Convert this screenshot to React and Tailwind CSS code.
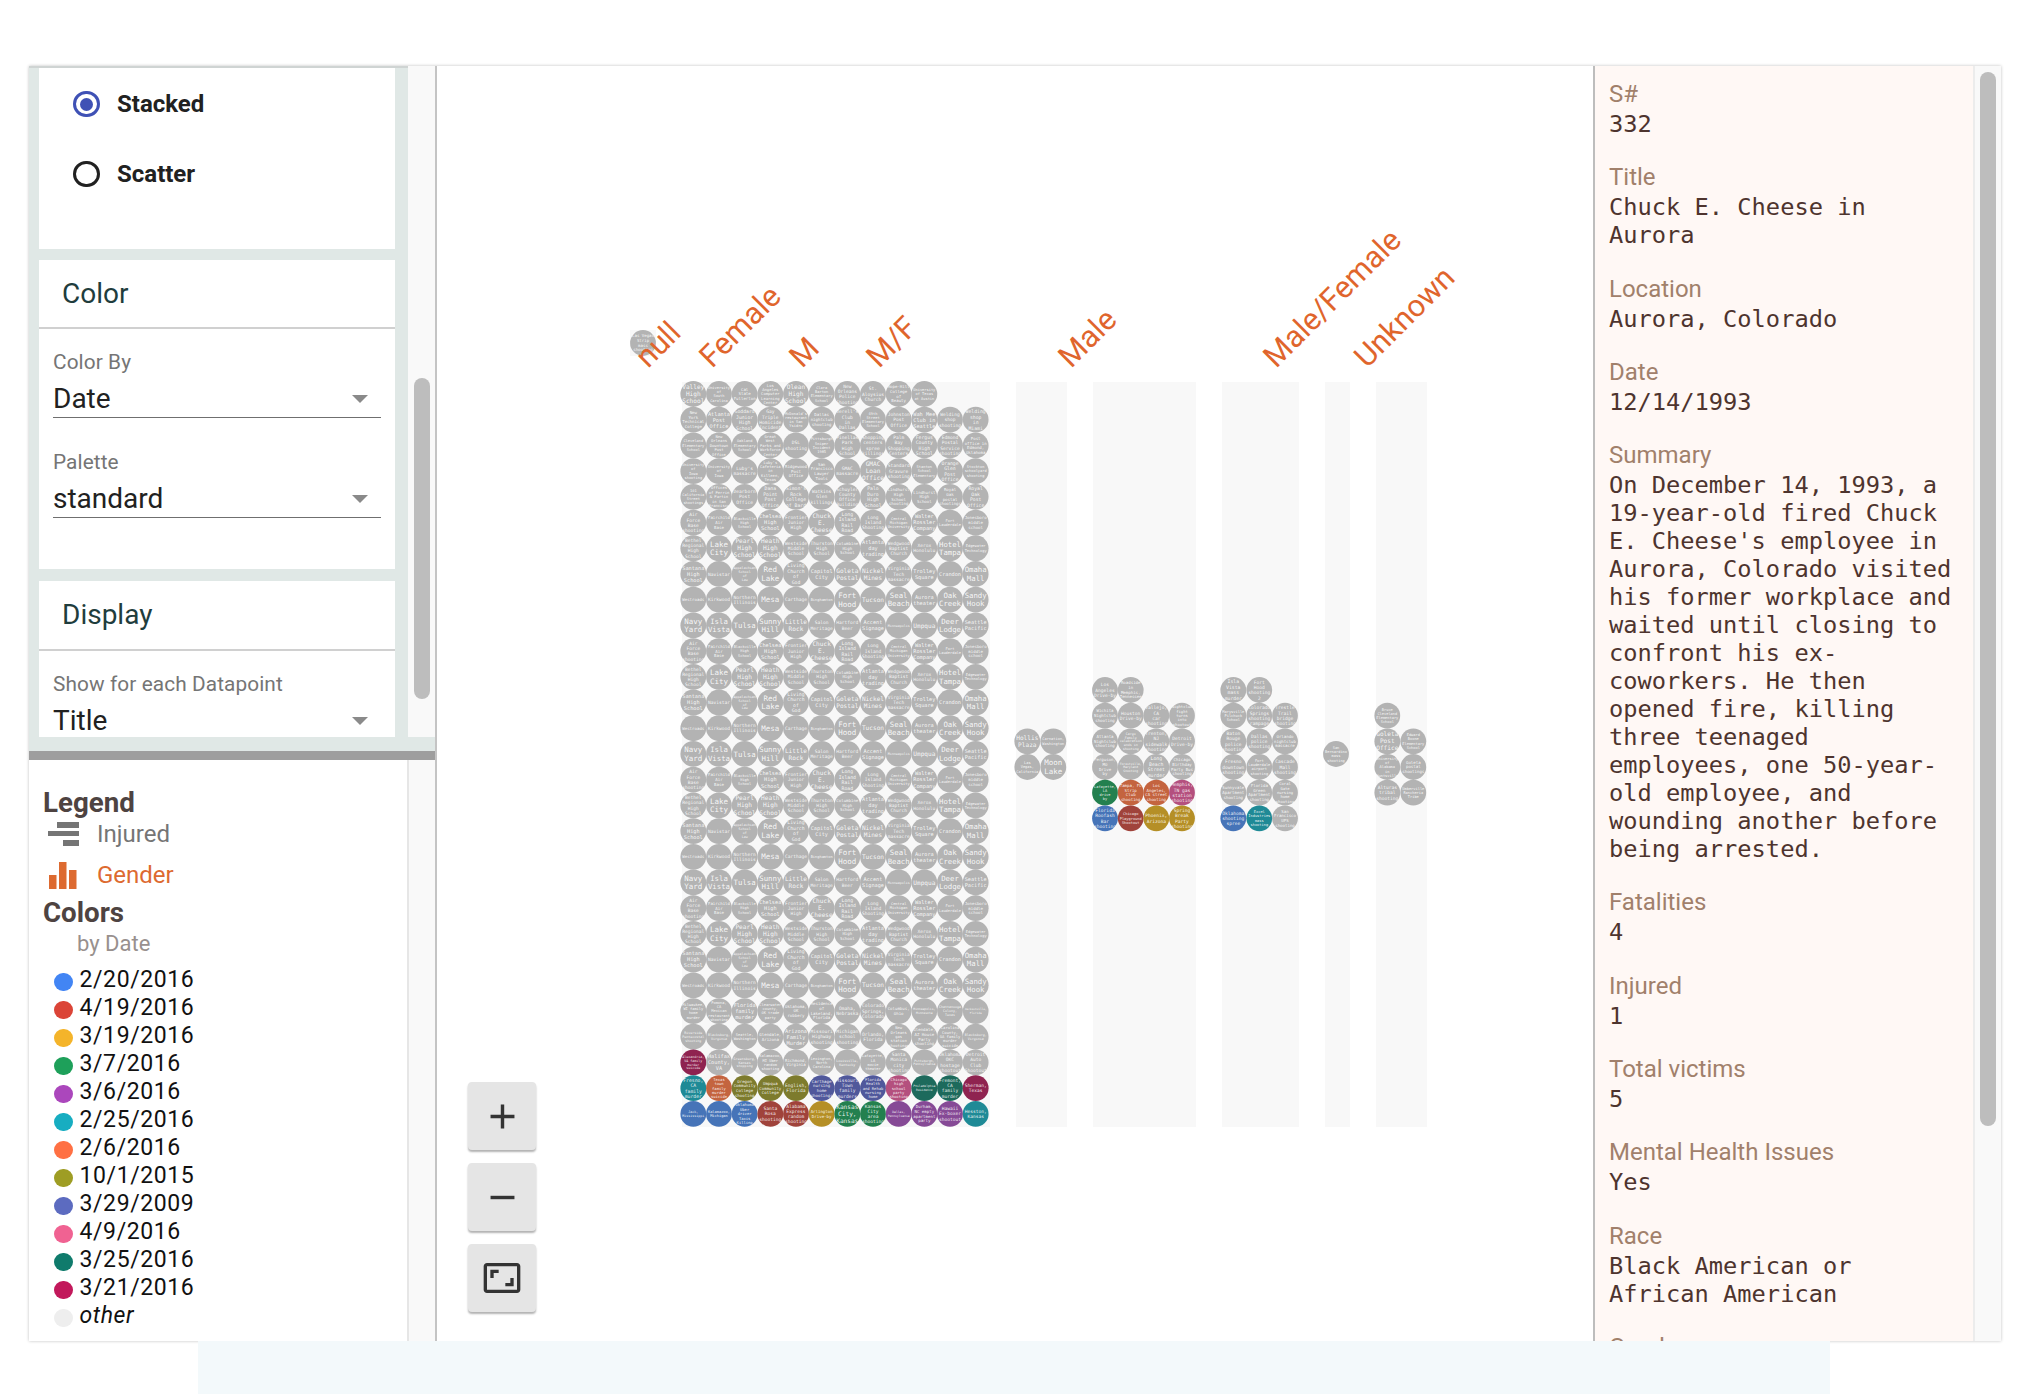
const GRAY = '#b3b3b3';
const C = {
  blue: '#4674b8', red: '#a0433b', yellow: '#b58f26', green: '#23804f', purple: '#864a96', teal: '#1f8a96',
  orange: '#c4643f', olive: '#7d7b2d', indigo: '#50589b', pink: '#b4507e', dteal: '#1d6a5c', crimson: '#8f2350',
};

const TOP_ROWS = [
  ['Valley High School', 'University of South Carolina', 'Cal State Fullerton', 'Los Angeles Computer Learning Center', 'Olean High School', 'Clara Barton Elementary School', 'New Orleans Police Shooting', 'St. Aloysius Church', 'Hope-Hill College of Beauty', 'University of Texas at Austin'],
  ['New York Technical College', 'Atlanta Post Office', 'Goddard Junior High School', 'Gay Triple Homicide Incident', "McDonald's restaurant in San Ysidro", 'Dallas nightclub shooting', "Jerell's Club in Dallas", '49th Street Elementary School', 'Johnston Post Office', 'Wah Mee Club in Seattle', 'Welding shop shooting', 'Welding shop in Miami'],
  ['Cleveland Elementary School', 'New Orleans Downtown Post Office', 'Oakland Elementary School', 'Great West Parks and Workforce Center', 'DSL shooting', 'Pittsburgh Sniper Incident 1985', 'Pinellas Park High School', 'Shopping centers spree killings', 'Palm Bay Shopping Centers', 'Fergus County High School', 'Edmond Postal Service shooting', 'Post office in Edmond, Oklahoma'],
  ['University of Iowa shooting', 'University of Iowa', "Luby's massacre", "Luby's Cafeteria in Killeen, Texas", 'Ridgewood Post Office', 'San Francisco Lawyer Tools', 'GMAC massacre', 'GMAC Loan Office', 'Standard Gravure shooting', 'Stanton School Elementary', 'Orange Glen Post Office', 'Stockton schoolyard shooting'],
  ['101 California Street shootings', 'Offices of Perrin & Partin in San Francisco', 'Dearborn Post Office', 'Dana Point Post Office', "Simon's Rock College of Bard", 'Watkins Glen killings', 'Schuyler County Office Building', 'Palo Duro High School', 'Lindhurst High School shooting', 'Lindhurst High School', 'Royal Oak postal shootings', 'Royal Oak Post Office'],
];
const FILL = [
  'Air Force Base shooting', 'Fairchild Air Base', 'Blackville High School', 'Chelsea High School', 'Frontier Junior High', 'Chuck E. Cheese', 'Long Island Rail Road', 'Long Island Shooting', 'Central Michigan University', 'Walter Rossler Company', 'Fort Lauderdale', 'Jonesboro middle school', 'Bethel Regional High School', 'Lake City', 'Pearl High School', 'Heath High School', 'Westside Middle School', 'Thurston High School', 'Columbine High School', 'Atlanta day trading', 'Wedgwood Baptist Church', 'Xerox Honolulu', 'Hotel Tampa', 'Edgewater Technology', 'Santana High School', 'Navistar', 'Appalachian School of Law', 'Red Lake', 'Living Church of God', 'Capitol City', 'Goleta Postal', 'Nickel Mines', 'Virginia Tech massacre', 'Trolley Square', 'Crandon', 'Omaha Mall', 'Westroads', 'Kirkwood', 'Northern Illinois', 'Mesa', 'Carthage', 'Binghamton', 'Fort Hood', 'Tucson', 'Seal Beach', 'Aurora theater', 'Oak Creek', 'Sandy Hook', 'Navy Yard', 'Isla Vista', 'Tulsa', 'Sunny Hill', 'Little Rock', 'Salon Meritage', 'Hartford Beer', 'Accent Signage', 'Minneapolis', 'Umpqua', 'Deer Lodge', 'Seattle Pacific',
];
const ROW26 = ['Milwaukee, WI family home murder', 'Pomona, CA Mexican restaurant shooting', 'Florida family murder', 'Clearwater county, OK trade party', 'Oklahoma, OK robbery', 'Residence of Lakeland, Florida', 'Omaha, Nebraska', 'Colorado Springs, Colorado', 'Columbus, Ohio', 'Minneapolis, Minnesota', 'Chattanooga Colony, Texas', 'Jacksonville, Florida'];
const ROW27 = ['Riverside Pentecostal shooting', 'Blacksburg, Virginia', 'Seattle, Washington', 'Glendale, Arizona', 'Arizona Family Murder', 'Missouri Highway shooting', 'Michigan school shooting', 'Orlando, Florida', 'New Orleans gas station shootings', 'Glendale, AZ House Party shooting', 'Carolina County, GA family murder suicide', 'Blacksburg, Virginia'];
const ROW28 = ['Alexandria, VA family murder suicide', 'Halifax County, VA', 'Greensburg, Kansas shopping', 'Kalamazoo, MI Uber random shooting', 'Richmond, Virginia', 'Lexington, North Carolina', 'Louisville, Kentucky', 'Lafayette, LA movie theater', 'Santa Monica city shooting', 'Pittsburgh, Pennsylvania', 'Oklahoma OKC hostage shootout', 'Detroit Auto Club Shootout'];
const ROW29 = [['Fresno, CA family murder', 'teal'], ['Texas town family murder suicide', 'orange'], ['Oregon Community College shooting', 'olive'], ['Umpqua Community College', 'olive'], ['English, Florida', 'olive'], ['Carthage nursing home shootings', 'indigo'], ['Missouri Town family murders', 'indigo'], ['Florida Health and Rehab nursing home', 'indigo'], ['Chicago high school party shooting', 'pink'], ['Philadelphia Residence', 'dteal'], ['Fremont, CA family murder', 'dteal'], ['Sherman, Texas', 'crimson']];
const ROW30 = [['Jack, Mississippi', 'blue'], ['Kalamazoo, Michigan', 'blue'], ['Oklahoma Uber driver Taxis Killing', 'blue'], ['Santa Rosa shooting', 'red'], ['Alabama Express random shooting', 'red'], ['Arlington Drive-by', 'yellow'], ['Kansas City, Kansas', 'green'], ['Kansas City area shooting', 'green'], ['Dallas, Pennsylvania', 'purple'], ['Durham, NC empty apartment party', 'purple'], ['Hawaii Ex-boxer shootout', 'purple'], ['Hesston, Kansas', 'teal']];

const X1 = (i) => 693.3 + i * 25.67;
const Y1 = (r) => 394 + r * 25.71;
const RY = [690, 715.7, 741.3, 767, 792.7, 818.3];

function buildCircles() {
  const out = [{ x: 643, y: 343, t: 'Las Vegas Strip mass shooting' }];
  for (let r = 0; r < 29; r++) {
    const count = r === 0 ? 10 : 12;
    for (let i = 0; i < count; i++) {
      let t;
      let c;
      if (r < 5) t = TOP_ROWS[r][i];
      else if (r === 24) t = ROW26[i];
      else if (r === 25) t = ROW27[i];
      else if (r === 26) { t = ROW28[i]; if (i === 0) c = C.crimson; }
      else if (r === 27) { t = ROW29[i][0]; c = C[ROW29[i][1]]; }
      else if (r === 28) { t = ROW30[i][0]; c = C[ROW30[i][1]]; }
      else t = FILL[(r * 12 + i) % FILL.length];
      out.push({ x: X1(i), y: Y1(r), t, c });
    }
  }
  const add = (x, y, t, c) => out.push({ x, y, t, c: c && C[c] });
  add(1027.3, 741.3, 'Hollis Plaza'); add(1053.3, 741.3, 'Carnation, Washington');
  add(1027.3, 767, 'Las Vegas, California'); add(1053.3, 767, 'Moon Lake');
  const c3 = [1105, 1130.7, 1156.3, 1182];
  [
    ['Los Angeles Drive-by', 'Roadside in Memphis, Tennessee'],
    ['Wichita Nightclub shooting', 'Houston Drive-by', 'Vallejo, CA car shooting', 'Nightclub fight turns into shootout'],
    ['Atlanta Nightclub shooting', 'Cargo Family celebration ends in shooting', 'Trenton, NJ sidewalk shooting', 'Detroit Drive-by'],
    ['Ferguson, MO Drive by', 'Forestville, Maryland Shooting', 'Long Beach Street murder', 'Chicago Birthday Party Bus shooting'],
    ['Lafayette, LA drive by', 'Tampa, FL Strip Club shooting', 'Los Angeles, CA street shooting', 'Memphis, TN gas station shooting'],
    ['Florida Roofash Bar shooting', 'Chicago Playground Shootout', 'Phoenix, Arizona', 'Spring Break Party shooting'],
  ].forEach((row, r) => row.forEach((t, i) => {
    const colors = [[], [], [], [], ['green', 'orange', 'orange', 'pink'], ['blue', 'red', 'yellow', 'yellow']];
    add(c3[i], RY[r], t, colors[r][i]);
  }));
  const c4 = [1233.3, 1259.3, 1285];
  [
    ['Isla Vista mass murder', 'Fort Hood shooting 2'],
    ['Marysville Pilchuck School', 'Colorado Springs shooting rampage', 'Trestle Trail bridge shooting'],
    ['Baton Rouge police shooting', 'Dallas police shooting', 'Orlando nightclub massacre'],
    ['Fresno downtown shooting', 'Fort Lauderdale airport shooting', 'Cascade Mall shooting'],
    ['Sunnyvale Apartment shooting', 'Florida Green Apartment shooting', 'Coral Gate nursing home shooting'],
    ['Oklahoma shooting spree', 'Excel Industries mass shooting', 'San Francisco UPS shooting'],
  ].forEach((row, r) => row.forEach((t, i) => {
    add(c4[i], RY[r], t, r === 5 ? ['blue', 'teal', null][i] : null);
  }));
  add(1336, 754, 'San Bernardino mass shooting');
  add(1387.3, RY[1], 'Bruce Cleveland Elementary School');
  add(1387.3, RY[2], 'Goleta Post Office'); add(1413.3, RY[2], 'Edward Boone Elementary School');
  add(1387.3, RY[3], 'University of Alabama in Huntsville'); add(1413.3, RY[3], 'Goleta postal shootings');
  add(1387.3, RY[4], 'Alturas tribal shooting'); add(1413.3, RY[4], 'Umberville Rancheria Tribe');
  return out;
}

// break a title in lines that fit a circle
function wrap(t) {
  const words = t.split(' ');
  if (words.length <= 4) return words;
  const lines = [];
  let cur = '';
  words.forEach((w) => {
    if (cur && (cur + ' ' + w).length > 9) { lines.push(cur); cur = w; }
    else cur = cur ? cur + ' ' + w : w;
  });
  lines.push(cur);
  return lines;
}

function Dot({ x, y, t, c }) {
  const lines = wrap(t);
  const longest = Math.max(...lines.map((l) => l.length));
  const size = Math.min(7.5, 22 / (longest * 0.6), 22 / (lines.length * 1.15));
  const start = y - ((lines.length - 1) * size * 1.15) / 2 + size * 0.35;
  return (
    <g>
      <circle cx={x} cy={y} r={12.9} fill={c || GRAY} />
      <text x={x} y={start} fontSize={size} textAnchor="middle" fill="#ffffff" fillOpacity="0.9" fontFamily="'DejaVu Sans Mono', monospace">
        {lines.map((l, i) => (
          <tspan key={i} x={x} dy={i === 0 ? 0 : size * 1.15}>{l}</tspan>
        ))}
      </text>
    </g>
  );
}

const COLUMNS = [[682, 308], [1016, 51], [1093, 103], [1222, 77], [1325, 25], [1376, 51]];
const AXIS = [
  ['null', 648, 369], ['Female', 712, 369], ['M', 802, 369], ['M/F', 879, 369], ['Male', 1071, 369],
  ['Male/Female', 1276, 369], ['Unknown', 1367, 369],
];

function Chart() {
  const circles = buildCircles();
  return (
    <svg viewBox="437 66 1157 1275" width="1157" height="1275" className="block">
      {COLUMNS.map(([x, w]) => (
        <rect key={x} x={x} y={382} width={w} height={745} fill="#f8f8f8" />
      ))}
      <rect x={630} y={330} width={26} height={26} fill="#f8f8f8" />
      {circles.map((d, i) => <Dot key={i} {...d} />)}
      {AXIS.map(([t, x, y]) => (
        <text key={t} x={x} y={y} transform={`rotate(-45 ${x} ${y})`} fontSize="30.6" fill="#e0652c" fontFamily="Roboto, sans-serif">{t}</text>
      ))}
    </svg>
  );
}

function SelectField({ label, value, className }) {
  return (
    <div className={className}>
      <div className="text-[20.8px] tracking-[0.1px] leading-[24px] text-[#757575]">{label}</div>
      <div className="flex items-center justify-between h-[37px] mt-[7px] border-b-[1.5px] border-[#6f6f6f] pr-[13px]">
        <span className="text-[28px] leading-[36px] text-[#212121]">{value}</span>
        <svg width="16" height="8" viewBox="0 0 16 8"><path d="M0 0h16L8 8z" fill="#8a8a8a" /></svg>
      </div>
    </div>
  );
}

function Radio({ label, checked }) {
  return (
    <div className="flex items-center h-[30px] pl-[34px]">
      <div className={`flex items-center justify-center w-[27px] h-[26px] rounded-full border-[3px] ${checked ? 'border-[#3f51b5]' : 'border-[#212121]'}`}>
        {checked && <div className="w-[13px] h-[13px] rounded-full bg-[#3f51b5]" />}
      </div>
      <span className="ml-[17px] text-[24px] font-bold text-[#212121]">{label}</span>
    </div>
  );
}

function Sidebar() {
  return (
    <div className="flex h-[685px] bg-[#e0e8e6]">
      <div className="w-[379px] pl-[10px] pr-[13px] overflow-hidden flex flex-col pb-[14px] border-t-2 border-[#cfd4d3]">
        <div className="bg-white h-[181px] shrink-0 pt-[21px] flex flex-col gap-[40px]">
          <Radio label="Stacked" checked />
          <Radio label="Scatter" />
        </div>
        <div className="bg-white h-[309px] shrink-0 mt-[11px]">
          <div className="h-[69px] flex items-center pl-[23px] border-b-2 border-[#d0d0d0] text-[28px] text-[#1f3d3d]">Color</div>
          <SelectField label="Color By" value="Date" className="pt-[21px] px-[14px]" />
          <SelectField label="Palette" value="standard" className="pt-[32px] px-[14px]" />
        </div>
        <div className="bg-white flex-1 overflow-hidden min-h-0 mt-[12px]">
          <div className="h-[70px] flex items-center pl-[23px] border-b-2 border-[#d0d0d0] text-[28px] text-[#1f3d3d]">Display</div>
          <SelectField label="Show for each Datapoint" value="Title" className="pt-[21px] px-[14px]" />
        </div>
      </div>
      <div className="flex-1 bg-[#f9f9f9] h-[671px] pl-[6px] pt-[312px]">
        <div className="w-[16px] h-[321px] rounded-full bg-[#bdbdbd]" />
      </div>
    </div>
  );
}

const LEGEND = [
  ['2/20/2016', '#4285f4'], ['4/19/2016', '#db4437'], ['3/19/2016', '#f4b42a'], ['3/7/2016', '#1ea05a'],
  ['3/6/2016', '#ab47bc'], ['2/25/2016', '#17adc1'], ['2/6/2016', '#ff7043'], ['10/1/2015', '#9e9d24'],
  ['3/29/2009', '#5c6bc0'], ['4/9/2016', '#f06292'], ['3/25/2016', '#0f7b6c'], ['3/21/2016', '#c2185b'],
];

function LegendRow({ label, color, italic }) {
  return (
    <div className="flex items-center h-[28px]">
      <div className="w-[18.5px] h-[18px] mt-[3px] rounded-full shrink-0" style={{ backgroundColor: color }} />
      <span className={`ml-[7px] text-[23px] tracking-[0.6px] text-[#111111] ${italic ? 'italic' : ''}`}>{label}</span>
    </div>
  );
}

function Legend() {
  return (
    <div className="flex flex-1 min-h-0">
      <div className="w-[378px] bg-white pl-[14px] pt-[26px] overflow-hidden">
        <div className="text-[27.7px] leading-[34px] font-bold text-[#4e4341]">Legend</div>
        <div className="flex items-center h-[30px] mt-[-1px]">
          <svg width="32" height="25" viewBox="0 0 32 25" className="ml-[5px]" fill="#757575">
            <rect x="9" y="0" width="22" height="6" /><rect x="0" y="9" width="31" height="5" /><rect x="15" y="18" width="16" height="6" />
          </svg>
          <span className="ml-[17px] text-[24px] text-[#757575]">Injured</span>
        </div>
        <div className="flex items-center h-[30px] mt-[11px]">
          <svg width="32" height="27" viewBox="0 0 32 27" className="ml-[5px]" fill="#dd6a30">
            <rect x="1" y="13" width="7.5" height="14" /><rect x="11" y="0" width="7.5" height="27" /><rect x="21" y="8" width="7.5" height="19" />
          </svg>
          <span className="ml-[17px] text-[24px] text-[#dd6a30]">Gender</span>
        </div>
        <div className="text-[27.7px] leading-[34px] font-bold text-[#4e4341] mt-[6px]">Colors</div>
        <div className="pl-[34px] text-[22px] leading-[28px] text-[#98908e]">by Date</div>
        <div className="pl-[11px] mt-[8px]">
          {LEGEND.map(([label, color]) => <LegendRow key={label} label={label} color={color} />)}
          <LegendRow label="other" color="#eeeeee" italic />
        </div>
      </div>
      <div className="flex-1 bg-[#f9f9f9] border-l-2 border-[#e6e6e6]" />
    </div>
  );
}

function ZoomButton({ children }) {
  return (
    <button className="flex items-center justify-center w-[68px] h-[68px] rounded-[4px] bg-[#e5e5e5] shadow-[0_2px_2px_rgba(0,0,0,0.3)]">
      {children}
    </button>
  );
}

const DETAILS = [
  ['S#', '332'],
  ['Title', 'Chuck E. Cheese in Aurora'],
  ['Location', 'Aurora, Colorado'],
  ['Date', '12/14/1993'],
  ['Summary', "On December 14, 1993, a 19-year-old fired Chuck E. Cheese's employee in Aurora, Colorado visited his former workplace and waited until closing to confront his ex-coworkers. He then opened fire, killing three teenaged employees, one 50-year-old employee, and wounding another before being arrested."],
  ['Fatalities', '4'],
  ['Injured', '1'],
  ['Total victims', '5'],
  ['Mental Health Issues', 'Yes'],
  ['Race', 'Black American or African American'],
  ['Gender', 'Male'],
];

function Details() {
  return (
    <div className="flex h-full border-l-2 border-[#bdbdbd]">
      <div className="w-[378px] bg-[#fff8f5] overflow-hidden pt-[13px] pl-[14px] pr-[14px]">
        {DETAILS.map(([label, value]) => (
          <div key={label} className="mb-[24.3px]">
            <div className="text-[24px] leading-[31px] text-[#a1806b]">{label}</div>
            <div className="text-[23.7px] leading-[28px] text-[#4e342e] font-['DejaVu_Sans_Mono',monospace]">{value}</div>
          </div>
        ))}
      </div>
      <div className="flex-1 bg-[#f9f9f9] border-l-2 border-[#ececec] pt-[6px] pl-[5px]">
        <div className="w-[16px] h-[1054px] rounded-full bg-[#bdbdbd]" />
      </div>
    </div>
  );
}

export default function App() {
  return (
    <div className="h-[1394px] bg-white flex flex-col font-['Roboto',sans-serif] overflow-hidden">
      <div className="h-[66px] shrink-0" />
      <div className="flex h-[1275px] shrink-0 w-[1972px] ml-[29px] shadow-[0_0_3px_rgba(0,0,0,0.25)] bg-white">
        <div className="w-[408px] shrink-0 flex flex-col border-r-2 border-[#c4c4c4]">
          <Sidebar />
          <div className="h-[9px] shrink-0 bg-[#9e9e9e]" />
          <Legend />
        </div>
        <div className="relative w-[1156px] shrink-0 overflow-hidden">
          <Chart />
          <div className="absolute left-[31px] top-[1016px] flex flex-col gap-[13px]">
            <ZoomButton>
              <svg width="41" height="41" viewBox="0 0 24 24" fill="#333333"><path d="M19 13h-6v6h-2v-6H5v-2h6V5h2v6h6v2z" /></svg>
            </ZoomButton>
            <ZoomButton>
              <svg width="41" height="41" viewBox="0 0 24 24" fill="#333333"><path d="M19 13H5v-2h14v2z" /></svg>
            </ZoomButton>
            <ZoomButton>
              <svg width="40" height="40" viewBox="0 0 24 24" fill="#333333"><path d="M19 12h-2v3h-3v2h5v-5zM7 9h3V7H5v5h2V9zm14-6H3c-1.1 0-2 .9-2 2v14c0 1.1.9 2 2 2h18c1.1 0 2-.9 2-2V5c0-1.1-.9-2-2-2zm0 16.01H3V4.99h18v14.02z" /></svg>
            </ZoomButton>
          </div>
        </div>
        <div className="flex-1 min-w-0">
          <Details />
        </div>
      </div>
      <div className="flex-1 ml-[198px] w-[1632px] bg-[#f3f9fb]" />
    </div>
  );
}
